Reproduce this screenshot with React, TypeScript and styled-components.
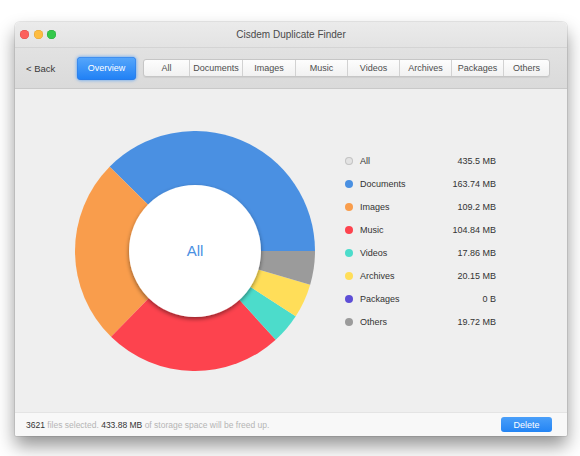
import React from "react";
import styled, { createGlobalStyle } from "styled-components";

const GlobalStyle = createGlobalStyle`
  html, body {
    margin: 0;
    padding: 0;
    background: #ffffff;
  }
  body {
    font-family: "Liberation Sans", "Helvetica Neue", Arial, sans-serif;
    -webkit-font-smoothing: antialiased;
  }
`;

type Slice = {
  name: string;
  size: string;
  value: number;
  color: string;
  hollow?: boolean;
};

const slices: Slice[] = [
  { name: "All", size: "435.5 MB", value: 0, color: "#e3e3e3", hollow: true },
  { name: "Documents", size: "163.74 MB", value: 163.74, color: "#4a90e2" },
  { name: "Images", size: "109.2 MB", value: 109.2, color: "#f99d4c" },
  { name: "Music", size: "104.84 MB", value: 104.84, color: "#fd434e" },
  { name: "Videos", size: "17.86 MB", value: 17.86, color: "#4cdccb" },
  { name: "Archives", size: "20.15 MB", value: 20.15, color: "#ffde59" },
  { name: "Packages", size: "0 B", value: 0, color: "#5d4ed6" },
  { name: "Others", size: "19.72 MB", value: 19.72, color: "#9b9b9b" },
];

const tabs = [
  { label: "All", width: 45 },
  { label: "Documents", width: 53 },
  { label: "Images", width: 53 },
  { label: "Music", width: 52 },
  { label: "Videos", width: 52 },
  { label: "Archives", width: 52 },
  { label: "Packages", width: 52 },
  { label: "Others", width: 46 },
];

const Page = styled.div`
  min-height: 456px;
  box-sizing: border-box;
  padding: 22px 0 20px 15px;
`;

const Window = styled.div`
  width: 552px;
  height: 414px;
  display: flex;
  flex-direction: column;
  border-radius: 5px 5px 2px 2px;
  overflow: hidden;
  box-shadow: 0 10px 18px rgba(0, 0, 0, 0.42), 0 0 0 1px rgba(0, 0, 0, 0.08);
`;

const TitleBar = styled.div`
  height: 26px;
  flex: none;
  display: flex;
  align-items: center;
  position: relative;
  padding-left: 5px;
  background: linear-gradient(#ebebeb, #e3e3e3);
  border-bottom: 1px solid #d4d4d4;
  box-sizing: border-box;
`;

const Lights = styled.div`
  display: flex;
  gap: 4.5px;
`;

const Light = styled.span<{ $color: string; $edge: string }>`
  width: 9px;
  height: 9px;
  border-radius: 50%;
  background: ${(p) => p.$color};
  box-shadow: inset 0 0 0 0.5px ${(p) => p.$edge};
`;

const Title = styled.div`
  position: absolute;
  left: 0;
  right: 0;
  text-align: center;
  font-size: 10px;
  color: #4a4a4a;
  pointer-events: none;
`;

const Toolbar = styled.div`
  height: 41px;
  flex: none;
  display: flex;
  align-items: center;
  padding-left: 11px;
  background: linear-gradient(#e2e2e2, #dadada);
  border-bottom: 1px solid #c9c9c9;
  box-sizing: border-box;
`;

const BackLink = styled.div`
  font-size: 9.5px;
  color: #3a3a3a;
  width: 51px;
`;

const PrimaryButton = styled.div`
  width: 59px;
  height: 23px;
  border-radius: 4px;
  display: flex;
  align-items: center;
  justify-content: center;
  font-size: 9px;
  color: #ffffff;
  background: linear-gradient(#57a7fb, #1f80f5);
  box-shadow: 0 0 3px 1px rgba(64, 150, 250, 0.55), inset 0 0 0 0.5px #2a78e4;
  margin-right: 7px;
`;

const Segmented = styled.div`
  display: flex;
  height: 18px;
  border-radius: 3px;
  border: 1px solid #c6c6c6;
  background: linear-gradient(#fdfdfd, #f1f1f1);
  box-shadow: 0 1px 1px rgba(0, 0, 0, 0.06);
  overflow: hidden;
  box-sizing: border-box;
`;

const Segment = styled.div<{ $first?: boolean }>`
  display: flex;
  align-items: center;
  justify-content: center;
  font-size: 9px;
  color: #4d4d4d;
  border-left: ${(p) => (p.$first ? "none" : "1px solid #d2d2d2")};
  box-sizing: border-box;
`;

const Content = styled.div`
  flex: 1;
  display: flex;
  align-items: center;
  padding-left: 60px;
  background: #efefef;
`;

const ChartBox = styled.div`
  position: relative;
  width: 240px;
  height: 240px;
  flex: none;
`;

const CenterLabel = styled.div`
  position: absolute;
  left: 0;
  right: 0;
  top: 0;
  bottom: 0;
  display: flex;
  align-items: center;
  justify-content: center;
  font-size: 15px;
  color: #4a90e2;
`;

const Legend = styled.div`
  margin-left: 30px;
  margin-top: -19px;
  width: 151px;
  display: flex;
  flex-direction: column;
`;

const LegendRow = styled.div`
  height: 23px;
  display: flex;
  align-items: center;
  font-size: 9px;
  color: #333333;
`;

const Dot = styled.span<{ $color: string; $hollow?: boolean }>`
  width: 8px;
  height: 8px;
  border-radius: 50%;
  margin-right: 7px;
  background: ${(p) => p.$color};
  box-shadow: ${(p) => (p.$hollow ? "inset 0 0 0 1px #c4c4c4" : "none")};
`;

const LegendName = styled.span`
  flex: 1;
`;

const Footer = styled.div`
  height: 24px;
  flex: none;
  display: flex;
  align-items: center;
  justify-content: space-between;
  padding: 0 15px 0 11px;
  background: #f8f8f8;
  border-top: 1px solid #e4e4e4;
  box-sizing: border-box;
`;

const Status = styled.div`
  font-size: 8.5px;
  color: #b5b5b5;
`;

const Strong = styled.span`
  color: #333333;
`;

const DeleteButton = styled.div`
  width: 51px;
  height: 15px;
  border-radius: 3px;
  display: flex;
  align-items: center;
  justify-content: center;
  font-size: 9px;
  color: #ffffff;
  background: linear-gradient(#4a9ff9, #2384f4);
`;

const cx = 120;
const cy = 120;
const R = 120;

const point = (deg: number, r: number) => {
  const a = (deg * Math.PI) / 180;
  return `${cx + r * Math.cos(a)} ${cy - r * Math.sin(a)}`;
};

const Donut = () => {
  const parts = slices.filter((s) => s.value > 0);
  const total = parts.reduce((sum, s) => sum + s.value, 0);
  let start = 0;
  return (
    <svg width="240" height="240" viewBox="0 0 240 240">
      <defs>
        <filter id="hole-shadow" x="-20%" y="-20%" width="140%" height="140%">
          <feDropShadow dx="0" dy="2" stdDeviation="2" floodColor="#000" floodOpacity="0.45" />
        </filter>
      </defs>
      {parts.map((s) => {
        const sweep = (s.value / total) * 360;
        const end = start + sweep;
        const large = sweep > 180 ? 1 : 0;
        const d = `M ${cx} ${cy} L ${point(start, R)} A ${R} ${R} 0 ${large} 0 ${point(end, R)} Z`;
        start = end;
        return <path key={s.name} d={d} fill={s.color} />;
      })}
      <circle cx={cx} cy={cy} r={66} fill="#ffffff" filter="url(#hole-shadow)" />
    </svg>
  );
};

export default function App() {
  return (
    <>
      <GlobalStyle />
      <Page>
        <Window>
          <TitleBar>
            <Lights>
              <Light $color="#fc605c" $edge="#de4a45" />
              <Light $color="#fdbc40" $edge="#dea032" />
              <Light $color="#34c84a" $edge="#27a93a" />
            </Lights>
            <Title>Cisdem Duplicate Finder</Title>
          </TitleBar>
          <Toolbar>
            <BackLink>&lt; Back</BackLink>
            <PrimaryButton>Overview</PrimaryButton>
            <Segmented>
              {tabs.map((t, i) => (
                <Segment key={t.label} $first={i === 0} style={{ width: t.width }}>
                  {t.label}
                </Segment>
              ))}
            </Segmented>
          </Toolbar>
          <Content>
            <ChartBox>
              <Donut />
              <CenterLabel>All</CenterLabel>
            </ChartBox>
            <Legend>
              {slices.map((s) => (
                <LegendRow key={s.name}>
                  <Dot $color={s.color} $hollow={s.hollow} />
                  <LegendName>{s.name}</LegendName>
                  <span>{s.size}</span>
                </LegendRow>
              ))}
            </Legend>
          </Content>
          <Footer>
            <Status>
              <Strong>3621</Strong> files selected. <Strong>433.88 MB</Strong> of storage space will be freed up.
            </Status>
            <DeleteButton>Delete</DeleteButton>
          </Footer>
        </Window>
      </Page>
    </>
  );
}
